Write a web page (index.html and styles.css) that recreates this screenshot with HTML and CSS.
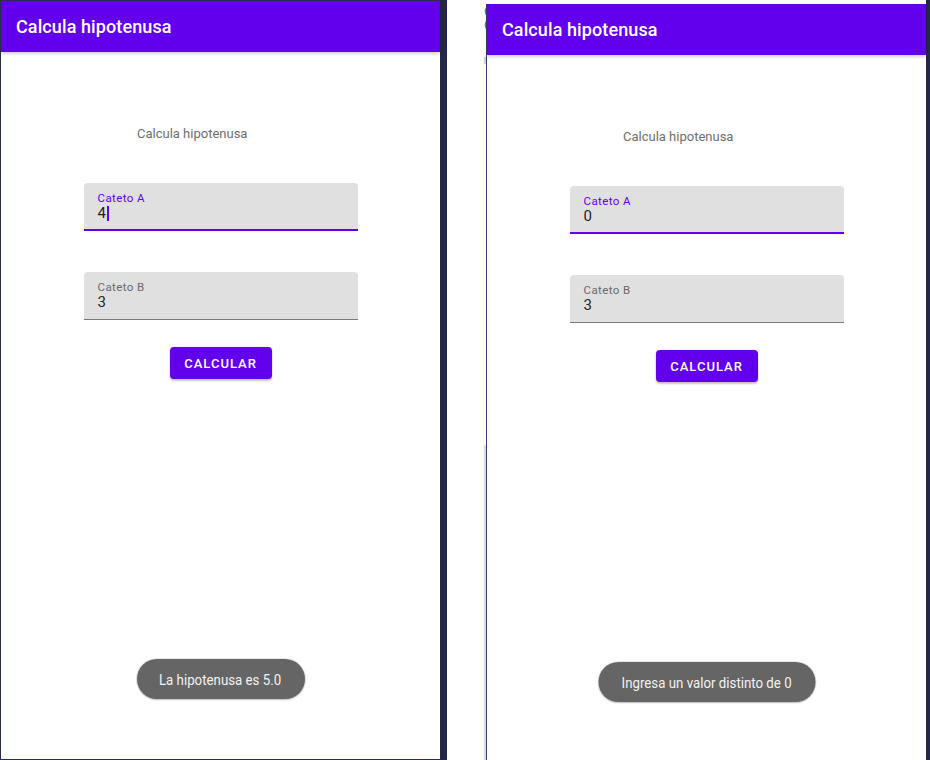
FILE: index.html
```html
<!DOCTYPE html>
<html lang="es">
<head>
<meta charset="utf-8">
<title>Calcula hipotenusa</title>
<link rel="stylesheet" href="styles.css">
</head>
<body>
<div class="screen">
  <div class="phone phone-left">
    <header class="appbar"><span class="appbar-title">Calcula hipotenusa</span></header>
    <main class="content">
      <p class="subtitle">Calcula hipotenusa</p>
      <div class="field field-focused">
        <span class="field-label">Cateto A</span>
        <span class="field-value">4<span class="cursor"></span></span>
      </div>
      <div class="field">
        <span class="field-label">Cateto B</span>
        <span class="field-value">3</span>
      </div>
      <button class="btn" type="button">CALCULAR</button>
    </main>
    <div class="toast toast-left"><span class="toast-text">La hipotenusa es 5.0</span></div>
  </div>
  <div class="divider"></div>
  <div class="gutter">
    <svg class="gutter-glyph" width="4" height="24" viewBox="0 0 4 24">
      <path d="M3.5 1 Q1 4 3.5 8" fill="none" stroke="#3f86c4" stroke-width="1.2"/>
      <path d="M3.5 14 Q1 18 3.5 22" fill="none" stroke="#3f86c4" stroke-width="1.2"/>
    </svg>
    <div class="gutter-mark"></div>
    <div class="gutter-strip"></div>
  </div>
  <div class="phone phone-right">
    <header class="appbar"><span class="appbar-title">Calcula hipotenusa</span></header>
    <main class="content">
      <p class="subtitle">Calcula hipotenusa</p>
      <div class="field field-focused">
        <span class="field-label">Cateto A</span>
        <span class="field-value">0</span>
      </div>
      <div class="field">
        <span class="field-label">Cateto B</span>
        <span class="field-value">3</span>
      </div>
      <button class="btn" type="button">CALCULAR</button>
    </main>
    <div class="toast toast-right"><span class="toast-text">Ingresa un valor distinto de 0</span></div>
  </div>
  <div class="edge"></div>
</div>
</body>
</html>
```

FILE: styles.css
```css
* { box-sizing: border-box; }

html, body {
  margin: 0;
  padding: 0;
  background: #ffffff;
}

body {
  font-family: Roboto, "Noto Sans", sans-serif;
}

.screen {
  display: flex;
  width: 930px;
  height: 760px;
  overflow: hidden;
  background: #ffffff;
}

.phone {
  position: relative;
  flex: none;
  background: #ffffff;
}

.phone-left {
  width: 440px;
  height: 760px;
  border-top: 1px solid #2b2d55;
  border-left: 1px solid #2b2d55;
  border-bottom: 1px solid #2b2d55;
}

.phone-right {
  width: 440px;
  height: 756px;
  margin-top: 4px;
  border-left: 1px solid #3a3d6c;
}

.divider {
  flex: none;
  width: 7px;
  background: #242747;
}

.gutter {
  flex: none;
  width: 39px;
  display: flex;
  flex-direction: column;
  align-items: flex-end;
}

.gutter-glyph {
  display: block;
  margin-top: 7px;
  margin-right: -1px;
}

.gutter-mark {
  width: 2px;
  height: 7px;
  margin-top: 26px;
  background: #c9d0dd;
}

.gutter-strip {
  width: 2px;
  height: 315px;
  margin-top: auto;
  background: #d4dae7;
}

.edge {
  flex: none;
  width: 4px;
  background: #242747;
}

.appbar {
  position: relative;
  z-index: 1;
  height: 51px;
  display: flex;
  align-items: center;
  padding-left: 15px;
  background: #6200ee;
  box-shadow: 0 2px 3px rgba(0, 0, 0, 0.18);
}

.appbar-title {
  color: #ffffff;
  font-size: 18px;
  font-weight: 500;
  letter-spacing: 0.1px;
}

.content {
  display: flex;
  flex-direction: column;
  align-items: center;
}

.subtitle {
  align-self: flex-start;
  margin: 74px 0 0 136px;
  font-size: 13px;
  line-height: 16px;
  color: #6e6e6e;
}

.field {
  width: 274px;
  height: 48px;
  margin-top: 41px;
  padding: 9px 14px 0;
  display: flex;
  flex-direction: column;
  background: #e0e0e0;
  border-radius: 4px 4px 0 0;
  border-bottom: 1px solid #7a7a7a;
}

.field-focused {
  border-bottom: 2px solid #6200ee;
}

.field-label {
  font-size: 11.5px;
  line-height: 13px;
  letter-spacing: 0.4px;
  color: #6b6b6b;
}

.field-focused .field-label {
  color: #6200ee;
}

.field-value {
  display: flex;
  align-items: center;
  font-size: 15px;
  line-height: 16px;
  color: #1f1f1f;
}

.cursor {
  display: inline-block;
  width: 2px;
  height: 15px;
  margin-left: 1px;
  background: #6200ee;
}

.btn {
  width: 102px;
  height: 32px;
  margin-top: 27px;
  padding: 0;
  border: none;
  border-radius: 4px;
  background: #6200ee;
  color: #ffffff;
  font-family: Roboto, "Noto Sans", sans-serif;
  font-size: 13px;
  font-weight: 500;
  letter-spacing: 1px;
  box-shadow: 0 2px 2px rgba(0, 0, 0, 0.22), 0 0 2px rgba(0, 0, 0, 0.12);
}

.toast {
  position: absolute;
  top: 658px;
  left: 50%;
  transform: translateX(-50%);
  height: 40px;
  padding-top: 2px;
  display: flex;
  align-items: center;
  justify-content: center;
  border-radius: 20px;
  background: #656565;
  box-shadow: 0 0 0 1px rgba(0, 0, 0, 0.08), 0 1px 2px rgba(0, 0, 0, 0.2);
  white-space: nowrap;
}

.toast-left { width: 168px; }
.toast-right { width: 217px; }

.toast-text {
  display: inline-block;
  font-size: 15px;
  color: #f2f2f2;
  transform: scaleX(0.885);
  transform-origin: center;
}
```
